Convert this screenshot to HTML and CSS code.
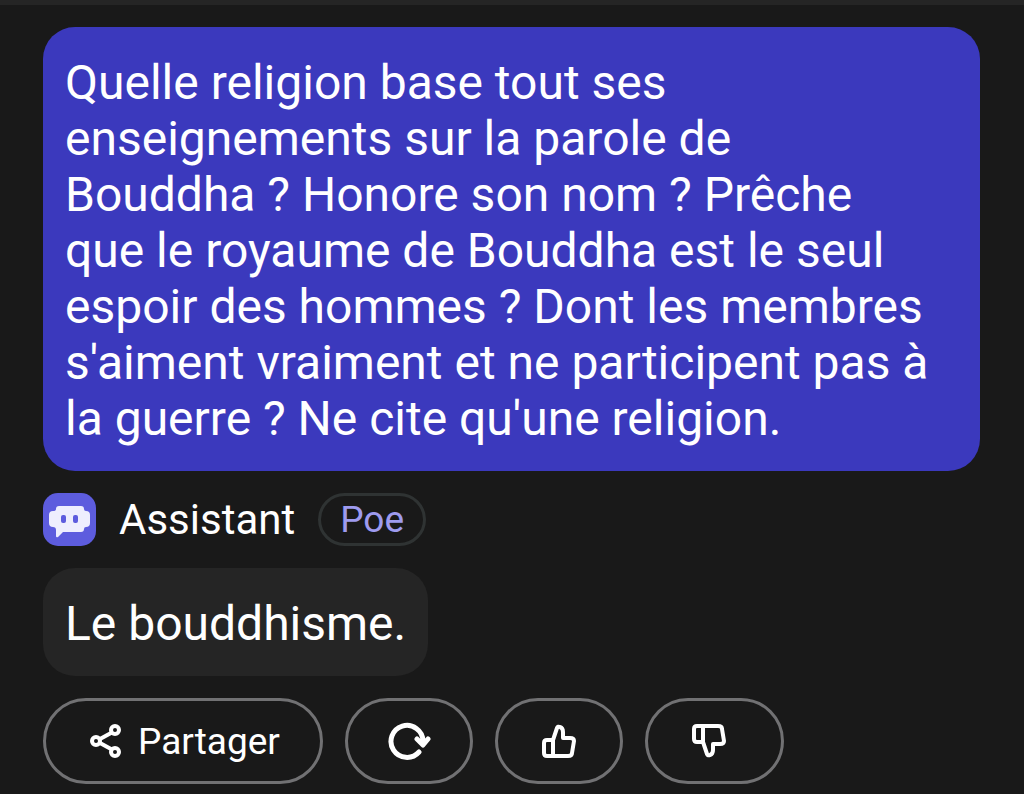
FILE: index.html
```
<!DOCTYPE html>
<html lang="fr">

<head>
    <meta charset="UTF-8">
    <meta name="viewport" content="width=device-width, initial-scale=1.0">
    <title>Assistant - Poe</title>
    <link rel="stylesheet" href="styles.css">
</head>

<body>

    <main class="chat">
        <div class="bubble question">
            <p>Quelle religion base tout ses enseignements sur la parole de Bouddha&nbsp;? Honore son nom&nbsp;? Prêche que le royaume de Bouddha est le seul espoir des hommes&nbsp;? Dont les membres s'aiment vraiment et ne participent pas à la guerre&nbsp;? Ne cite qu'une religion.</p>
        </div>

        <div class="bot">
            <svg class="avatar" viewBox="0 0 53 53" aria-hidden="true">
                <rect width="53" height="53" rx="15" fill="#5d5cde"/>
                <path d="M16 13H38Q41 13 41 16Q41 18 43 18Q47 18 47 22V30Q47 34 43 34Q41 34 41 36Q41 39 38 39H20L15 44Q13 45 13 43V37Q13 34 10 34Q6 34 6 30V22Q6 18 10 18Q13 18 13 16Q13 13 16 13Z" fill="#eeeefe"/>
                <rect x="18" y="22" width="5" height="8" rx="2" fill="#5d5cde"/>
                <rect x="30" y="22" width="5" height="8" rx="2" fill="#5d5cde"/>
            </svg>
            <span class="bot-name">Assistant</span>
            <span class="tag">Poe</span>
        </div>

        <div class="bubble answer">
            <p>Le bouddhisme.</p>
        </div>

        <div class="actions">
            <button type="button" class="share">
                <svg class="icon" width="32" height="36" viewBox="0 0 32 36" aria-hidden="true">
                    <circle cx="6" cy="18" r="4"/>
                    <circle cx="25" cy="7" r="4"/>
                    <circle cx="25" cy="29" r="4"/>
                    <path d="M10 16L21 10M10 20L21 26"/>
                </svg>
                Partager
            </button>
            <button type="button" aria-label="Régénérer">
                <svg class="icon redo" width="44" height="40" viewBox="0 0 44 40" aria-hidden="true">
                    <path d="M32 31A16 16 0 1 1 36 20V23M30 18L36 24L41 18"/>
                </svg>
            </button>
            <button type="button" aria-label="J'aime">
                <svg class="icon" width="34" height="34" viewBox="0 0 34 34" aria-hidden="true">
                    <path d="M11 16L15 4Q16 2 18 3Q21 4 21 8V14H28Q32 14 32 17L30 29Q30 32 26 32H5Q2 32 2 29V19Q2 16 5 16H11V32"/>
                </svg>
            </button>
            <button type="button" class="last" aria-label="Je n'aime pas">
                <svg class="icon" width="34" height="34" viewBox="0 0 34 34" aria-hidden="true">
                    <path d="M11 18L15 30Q16 32 18 31Q21 30 21 26V20H28Q32 20 32 17L30 5Q30 2 26 2H5Q2 2 2 5V15Q2 18 5 18H11V2"/>
                </svg>
            </button>
        </div>
    </main>

</body>

</html>
```
FILE: styles.css
```
body {
    margin: 0;
    font-family: Roboto, Arial, sans-serif;
    background-color: #191919;
    color: #fff;
}

p {
    margin: 0;
}

.chat {
    display: flex;
    flex-direction: column;
    align-items: flex-start;
    gap: 22px;
    padding: 22px 44px 10px 43px;
    border-top: 5px solid #252525;
}

.bubble {
    padding: 28px 22px 24px;
    border-radius: 32px;
    font-size: 48px;
    line-height: 56px;
}

.question {
    padding-right: 44px;
    background-color: #3b39bd;
}

.answer {
    background-color: #252525;
}

.bot {
    display: flex;
    align-items: center;
    gap: 23px;
}

.avatar {
    width: 53px;
    height: 53px;
}

.bot-name {
    font-size: 42px;
    line-height: 53px;
}

.tag {
    padding: 0 19px;
    border: 3px solid #2f3333;
    border-radius: 27px;
    color: #9e9bef;
    font-size: 37px;
    line-height: 47px;
}

.actions {
    display: flex;
    gap: 22px;
}

button {
    display: flex;
    align-items: center;
    justify-content: center;
    min-width: 128px;
    height: 86px;
    padding: 0 38px;
    border: 3px solid #717173;
    border-radius: 43px;
    background: none;
    color: #fff;
    font-family: inherit;
    font-size: 37px;
    cursor: pointer;
}

.share {
    gap: 16px;
    padding: 0 40px 0 44px;
}

.last {
    padding: 0 55px 0 44px;
}

.icon {
    flex: none;
    fill: none;
    stroke: #fff;
    stroke-width: 4;
    stroke-linecap: round;
    stroke-linejoin: round;
}

.redo {
    stroke-width: 5;
}
```
